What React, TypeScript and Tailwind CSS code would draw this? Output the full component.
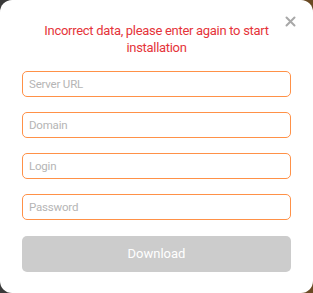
import React from "react";

export default function App() {
  const fields = ["Server URL", "Domain", "Login", "Password"];
  return (
    <div className="w-[313px] h-[293px] bg-[#3a3a3a] bg-[linear-gradient(90deg,#3a3a3a_0%,#3a3a3a_60%,#6b4a22_100%)]" style={{ fontFamily: "Roboto, 'Liberation Sans', sans-serif" }}>
      <div className="relative w-[313px] h-[293px] bg-white rounded-[12px] px-[22px] pt-[22px]">
        <button className="absolute right-[17px] top-[15px] w-[12px] h-[12px] flex items-center justify-center">
          <svg width="11" height="11" viewBox="0 0 11 11">
            <path d="M1.5 1.5 L9.5 9.5 M9.5 1.5 L1.5 9.5" stroke="#a8a8a8" strokeWidth="2" strokeLinecap="round" />
          </svg>
        </button>
        <div className="text-center text-[13px] leading-[17px] tracking-[-0.3px] text-[#e5343a]">
          Incorrect data, please enter again to start installation
        </div>
        <div className="flex flex-col gap-[15px] mt-[15px]">
          {fields.map((f) => (
            <input
              key={f}
              placeholder={f}
              className="w-full h-[26px] border border-[#ff9147] rounded-[5px] px-[6px] text-[11.5px] tracking-[-0.2px] text-[#555] placeholder:text-[#b5b5b5] outline-none"
              type={f === "Password" ? "password" : "text"}
            />
          ))}
        </div>
        <button className="mt-[16px] w-full h-[36px] rounded-[5px] bg-[#cccccc] text-white text-[13px]">
          Download
        </button>
      </div>
    </div>
  );
}
